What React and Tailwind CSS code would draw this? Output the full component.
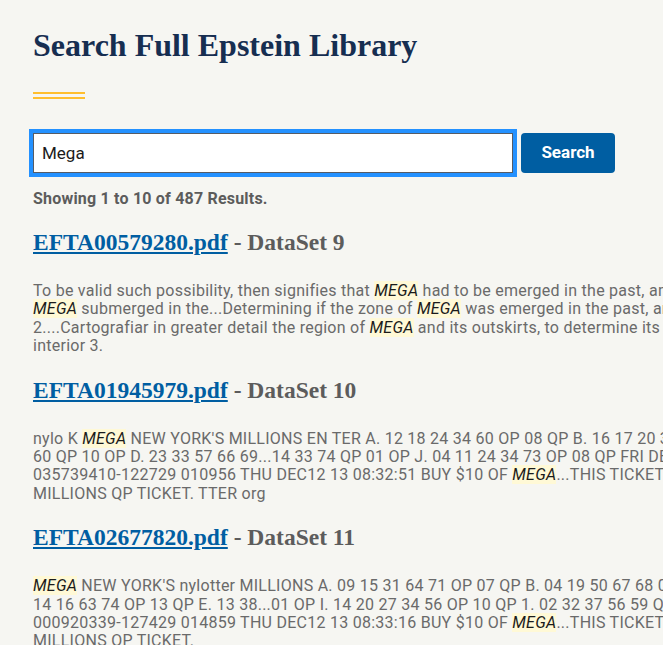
import React from "react";

const Hl = ({ children }) => (
  <em className="bg-[#fff9d6] text-[#1b1b1b] italic">{children}</em>
);

const results = [
  {
    file: "EFTA00579280.pdf",
    set: "DataSet 9",
    lines: [
      ["To be valid such possibility, then signifies that ", "MEGA", " had to be emerged in the past, and that the zone of the"],
      ["", "MEGA", " submerged in the...Determining if the zone of ", "MEGA", " was emerged in the past, and if so, to what degree"],
      ["2....Cartografiar in greater detail the region of ", "MEGA", " and its outskirts, to determine its structure and the"],
      ["interior 3."],
    ],
  },
  {
    file: "EFTA01945979.pdf",
    set: "DataSet 10",
    lines: [
      ["nylo K ", "MEGA", " NEW YORK'S MILLIONS EN TER A. 12 18 24 34 60 OP 08 QP B. 16 17 20 31 44 QP 11 QP C. 05"],
      ["60 QP 10 OP D. 23 33 57 66 69...14 33 74 QP 01 OP J. 04 11 24 34 73 OP 08 QP FRI DEC13 13"],
      ["035739410-122729 010956 THU DEC12 13 08:32:51 BUY $10 OF ", "MEGA", "...THIS TICKET IS NOT A"],
      ["MILLIONS QP TICKET. TTER org"],
    ],
  },
  {
    file: "EFTA02677820.pdf",
    set: "DataSet 11",
    lines: [
      ["", "MEGA", " NEW YORK'S nylotter MILLIONS A. 09 15 31 64 71 OP 07 QP B. 04 19 50 67 68 09 QP C."],
      ["14 16 63 74 OP 13 QP E. 13 38...01 OP I. 14 20 27 34 56 OP 10 QP 1. 02 32 37 56 59 QP 03 QP"],
      ["000920339-127429 014859 THU DEC12 13 08:33:16 BUY $10 OF ", "MEGA", "...THIS TICKET IS NOT A"],
      ["MILLIONS QP TICKET."],
    ],
  },
];

function Line({ parts }) {
  return (
    <div className="whitespace-nowrap">
      {parts.map((p, i) =>
        i % 2 === 1 ? <Hl key={i}>{p}</Hl> : <span key={i}>{p}</span>
      )}
    </div>
  );
}

export default function App() {
  return (
    <div className="w-[663px] h-[645px] overflow-hidden bg-[#f6f6f2] font-['Roboto',sans-serif]">
      <div className="pl-[33px] pt-[26px] w-[1000px]">
        <h1 className="font-['Liberation_Serif',serif] font-bold text-[32px] leading-[38px] text-[#162e51]">
          Search Full Epstein Library
        </h1>
        <div className="mt-[28px] w-[52px] flex flex-col gap-[3px]">
          <div className="h-[2px] bg-[#ffbe2e]" />
          <div className="h-[2px] bg-[#ffbe2e]" />
        </div>
        <div className="mt-[34px] flex gap-[8px]">
          <input
            defaultValue="Mega"
            className="w-[480px] h-[40px] bg-white border border-[#565c65] ring-4 ring-[#2491ff] px-[8px] text-[17px] text-[#1b1b1b] font-['Roboto',sans-serif] outline-none"
          />
          <button className="w-[94px] h-[40px] rounded-[4px] bg-[#005ea2] text-white font-bold text-[17px]">
            Search
          </button>
        </div>
        <div className="mt-[14px] text-[16px] font-bold tracking-[0.2px] text-[#5c5c5c] leading-[24px]">
          Showing 1 to 10 of 487 Results.
        </div>
        <div className="mt-[17px] flex flex-col gap-[20px]">
          {results.map((r) => (
            <div key={r.file}>
              <h3 className="font-['Liberation_Serif',serif] font-bold text-[23.5px] leading-[28px]">
                <a href="#" className="text-[#005ea2] underline">{r.file}</a>
                <span className="text-[#5c5c5c]"> - {r.set}</span>
              </h3>
              <div className="mt-[26px] text-[16px] tracking-[0.26px] leading-[18.4px] text-[#6a6a6a]">
                {r.lines.map((l, i) => (
                  <Line key={i} parts={l} />
                ))}
              </div>
            </div>
          ))}
        </div>
      </div>
    </div>
  );
}
